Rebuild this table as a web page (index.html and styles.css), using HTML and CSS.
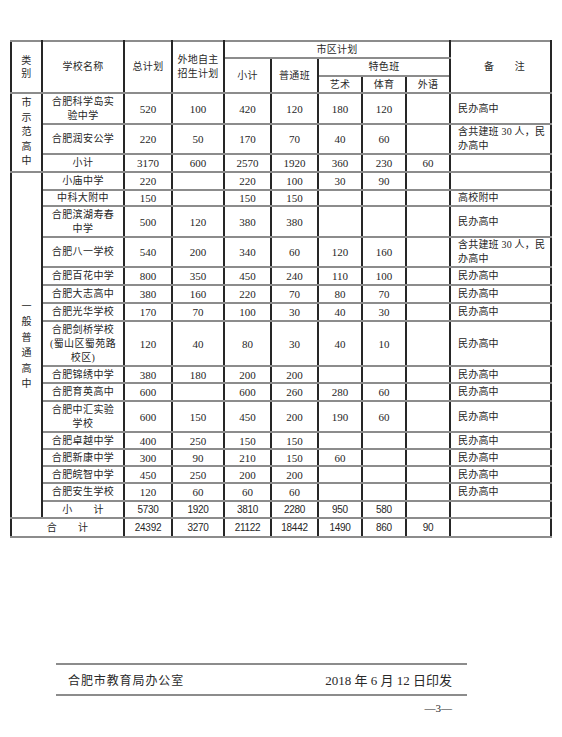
FILE: index.html
```html
<!DOCTYPE html>
<html lang="zh-CN">
<head>
<meta charset="utf-8">
<title>招生计划</title>
<link rel="stylesheet" href="styles.css">
</head>
<body>
<table class="plan">
  <colgroup>
    <col class="c1"><col class="c2"><col class="c3"><col class="c4"><col class="c5">
    <col class="c6"><col class="c7"><col class="c8"><col class="c9"><col class="c10">
  </colgroup>
  <thead>
    <tr class="h17">
      <th rowspan="3" class="lh13">类<br>别</th>
      <th rowspan="3">学校名称</th>
      <th rowspan="3">总计划</th>
      <th rowspan="3" class="lh14">外地自主<br>招生计划</th>
      <th colspan="5">市区计划</th>
      <th rowspan="3" class="note">备&emsp;&emsp;注</th>
    </tr>
    <tr class="h18">
      <th rowspan="2">小计</th>
      <th rowspan="2">普通班</th>
      <th colspan="3">特色班</th>
    </tr>
    <tr class="h17">
      <th>艺术</th><th>体育</th><th>外语</th>
    </tr>
  </thead>
  <tbody>
    <tr class="h31">
      <td rowspan="3" class="cat">市<br>示<br>范<br>高<br>中</td>
      <td class="name">合肥科学岛实<br>验中学</td><td>520</td><td>100</td><td>420</td><td>120</td><td>180</td><td>120</td><td></td><td class="rm">民办高中</td>
    </tr>
    <tr class="h30">
      <td class="name">合肥润安公学</td><td>220</td><td>50</td><td>170</td><td>70</td><td>40</td><td>60</td><td></td><td class="rm">含共建班 30 人，民<br>办高中</td>
    </tr>
    <tr class="h18">
      <td class="name">小计</td><td>3170</td><td>600</td><td>2570</td><td>1920</td><td>360</td><td>230</td><td>60</td><td class="rm"></td>
    </tr>
    <tr class="h18">
      <td rowspan="16" class="cat cat2">一<br>般<br>普<br>通<br>高<br>中</td>
      <td class="name">小庙中学</td><td>220</td><td></td><td>220</td><td>100</td><td>30</td><td>90</td><td></td><td class="rm"></td>
    </tr>
    <tr class="h16">
      <td class="name">中科大附中</td><td>150</td><td></td><td>150</td><td>150</td><td></td><td></td><td></td><td class="rm">高校附中</td>
    </tr>
    <tr class="h31">
      <td class="name">合肥滨湖寿春<br>中学</td><td>500</td><td>120</td><td>380</td><td>380</td><td></td><td></td><td></td><td class="rm">民办高中</td>
    </tr>
    <tr class="h30">
      <td class="name">合肥八一学校</td><td>540</td><td>200</td><td>340</td><td>60</td><td>120</td><td>160</td><td></td><td class="rm">含共建班 30 人，民<br>办高中</td>
    </tr>
    <tr class="h18">
      <td class="name">合肥百花中学</td><td>800</td><td>350</td><td>450</td><td>240</td><td>110</td><td>100</td><td></td><td class="rm">民办高中</td>
    </tr>
    <tr class="h18">
      <td class="name">合肥大志高中</td><td>380</td><td>160</td><td>220</td><td>70</td><td>80</td><td>70</td><td></td><td class="rm">民办高中</td>
    </tr>
    <tr class="h18">
      <td class="name">合肥光华学校</td><td>170</td><td>70</td><td>100</td><td>30</td><td>40</td><td>30</td><td></td><td class="rm">民办高中</td>
    </tr>
    <tr class="h45">
      <td class="name">合肥剑桥学校<br>(蜀山区蜀苑路<br>校区)</td><td>120</td><td>40</td><td>80</td><td>30</td><td>40</td><td>10</td><td></td><td class="rm">民办高中</td>
    </tr>
    <tr class="h17">
      <td class="name">合肥锦绣中学</td><td>380</td><td>180</td><td>200</td><td>200</td><td></td><td></td><td></td><td class="rm">民办高中</td>
    </tr>
    <tr class="h18">
      <td class="name">合肥育英高中</td><td>600</td><td></td><td>600</td><td>260</td><td>280</td><td>60</td><td></td><td class="rm">民办高中</td>
    </tr>
    <tr class="h31">
      <td class="name">合肥中汇实验<br>学校</td><td>600</td><td>150</td><td>450</td><td>200</td><td>190</td><td>60</td><td></td><td class="rm">民办高中</td>
    </tr>
    <tr class="h17">
      <td class="name">合肥卓越中学</td><td>400</td><td>250</td><td>150</td><td>150</td><td></td><td></td><td></td><td class="rm">民办高中</td>
    </tr>
    <tr class="h17">
      <td class="name">合肥新康中学</td><td>300</td><td>90</td><td>210</td><td>150</td><td>60</td><td></td><td></td><td class="rm">民办高中</td>
    </tr>
    <tr class="h17">
      <td class="name">合肥皖智中学</td><td>450</td><td>250</td><td>200</td><td>200</td><td></td><td></td><td></td><td class="rm">民办高中</td>
    </tr>
    <tr class="h18">
      <td class="name">合肥安生学校</td><td>120</td><td>60</td><td>60</td><td>60</td><td></td><td></td><td></td><td class="rm">民办高中</td>
    </tr>
    <tr class="h17 sum">
      <td class="name">小&emsp;&emsp;计</td><td>5730</td><td>1920</td><td>3810</td><td>2280</td><td>950</td><td>580</td><td></td><td class="rm"></td>
    </tr>
    <tr class="h19 sum">
      <td colspan="2" class="name total">合&emsp;&emsp;计</td><td>24392</td><td>3270</td><td>21122</td><td>18442</td><td>1490</td><td>860</td><td>90</td><td class="rm"></td>
    </tr>
  </tbody>
</table>

<div class="footer">
  <div class="footer-row">
    <span class="office">合肥市教育局办公室</span>
    <span class="date">2018 年 6 月 12 日印发</span>
  </div>
  <div class="page-no">—3—</div>
</div>
</body>
</html>
```

FILE: styles.css
```css
html, body {
  margin: 0;
  padding: 0;
  background: #ffffff;
}

body {
  width: 562px;
  height: 737px;
  overflow: hidden;
  color: #262626;
  font-family: "Liberation Serif", "Noto Sans CJK SC", serif;
}

.plan {
  margin: 40px 0 0 10px;
  width: 540px;
  table-layout: fixed;
  border-collapse: collapse;
}

.c1 { width: 31px; }
.c2 { width: 82px; }
.c3 { width: 48px; }
.c4 { width: 52px; }
.c5 { width: 47px; }
.c6 { width: 47px; }
.c7 { width: 44px; }
.c8 { width: 44px; }
.c9 { width: 44px; }
.c10 { width: 101px; }

.plan th,
.plan td {
  padding: 0;
  border-left: 2px solid #262626;
  border-right: 2px solid #262626;
  border-top: 2px solid #8c8c8c;
  border-bottom: 2px solid #8c8c8c;
  text-align: center;
  vertical-align: middle;
  font-size: 11px;
  line-height: 14px;
  font-weight: 400;
  overflow: hidden;
}

.plan th {
  font-size: 10px;
  letter-spacing: 0.3px;
  color: #2a2a2a;
}

.lh13 { line-height: 13px !important; }
.lh14 { line-height: 14px !important; }

.plan th.note {
  padding-left: 8px;
}

.h16 { height: 16px; }
.h17 { height: 17px; }
.h18 { height: 18px; }
.h19 { height: 19px; }
.h30 { height: 30px; }
.h31 { height: 31px; }
.h45 { height: 45px; }

.plan td.name {
  font-size: 10px;
  letter-spacing: 0.4px;
}

.plan td.cat {
  font-size: 10px;
  line-height: 14.5px;
}

.plan td.cat2 {
  line-height: 15.5px;
}

.plan td.rm {
  text-align: left;
  padding-left: 7px;
  font-size: 10px;
  letter-spacing: 0.2px;
}

.sum td {
  font-family: "Liberation Sans", "Noto Sans CJK SC", sans-serif;
  font-size: 10px;
  letter-spacing: -0.3px;
}

.sum td.name {
  font-size: 10px;
  letter-spacing: 0.4px;
}

.footer {
  margin: 125px 0 0 56px;
  width: 411px;
}

.footer-row {
  display: flex;
  justify-content: space-between;
  align-items: center;
  height: 29px;
  padding: 0 15px 0 12px;
  border-top: 2px solid #8c8c8c;
  border-bottom: 2px solid #8c8c8c;
  font-size: 12px;
  color: #2a2a2a;
}

.office {
  letter-spacing: 0.9px;
}

.date {
  font-size: 13px;
}

.page-no {
  text-align: right;
  padding-right: 15px;
  margin-top: 5px;
  font-size: 11px;
  line-height: 14px;
  color: #2a2a2a;
}
```
